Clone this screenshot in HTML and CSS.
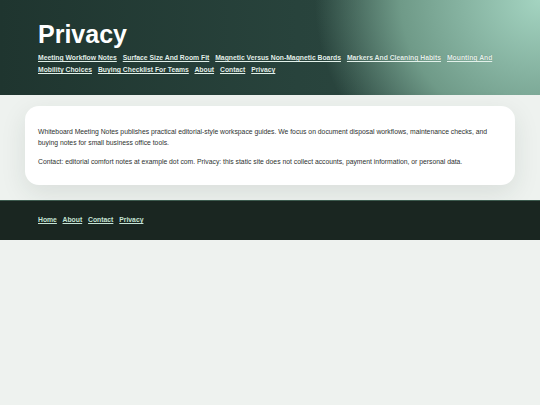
FILE: index.html
```html
<!DOCTYPE html>
<html lang="en">
<head>
<meta charset="utf-8">
<title>Privacy</title>
<link rel="stylesheet" href="styles.css">
</head>
<body>
<header class="site-header">
  <h1 class="page-title">Privacy</h1>
  <nav class="top-nav">
    <a href="#">Meeting Workflow Notes</a>
    <a href="#">Surface Size And Room Fit</a>
    <a href="#">Magnetic Versus Non-Magnetic Boards</a>
    <a href="#">Markers And Cleaning Habits</a>
    <a href="#">Mounting And Mobility Choices</a>
    <a href="#">Buying Checklist For Teams</a>
    <a href="#">About</a>
    <a href="#">Contact</a>
    <a href="#">Privacy</a>
  </nav>
</header>
<main class="content">
  <section class="card">
    <p>Whiteboard Meeting Notes publishes practical editorial-style workspace guides. We focus on document disposal workflows, maintenance checks, and buying notes for small business office tools.</p>
    <p>Contact: editorial comfort notes at example dot com. Privacy: this static site does not collect accounts, payment information, or personal data.</p>
  </section>
</main>
<footer class="site-footer">
  <nav class="foot-nav">
    <a href="#">Home</a>
    <a href="#">About</a>
    <a href="#">Contact</a>
    <a href="#">Privacy</a>
  </nav>
</footer>
</body>
</html>
```

FILE: styles.css
```css
* { box-sizing: border-box; }

body {
  margin: 0;
  background: #eef2ef;
  font-family: "Liberation Sans", Arial, sans-serif;
  color: #2b2f2d;
}

/* dark green band with a pale glow in the top-right corner */
.site-header {
  padding: 21px 38px 19px;
  background:
    radial-gradient(ellipse 225px 210px at 100% 0%, #a4d4c1 0%, #86b3a1 35%, #6f9a88 62%, rgba(46, 74, 67, 0) 100%),
    linear-gradient(90deg, #1f352f 0%, #28433c 55%, #2e4a43 100%);
}

.page-title {
  margin: 0 0 3.5px;
  font-size: 25px;
  line-height: 1.1;
  font-weight: 700;
  color: #ffffff;
}

.top-nav {
  font-size: 6.8px;
  line-height: 12px;
  font-weight: 700;
}

.top-nav a {
  margin-right: 4px;
  color: #e2f1ea;
  text-decoration: underline;
  text-shadow: 0 0 1px rgba(0, 0, 0, 0.35);
}

.content {
  padding: 11px 25px 15px;
}

.card {
  background: #ffffff;
  border-radius: 14px;
  padding: 19.5px 13px 18.5px;
  box-shadow: 0 8px 26px rgba(30, 50, 42, 0.1);
}

.card p {
  margin: 0;
  font-size: 6.8px;
  line-height: 11px;
  color: #2e3230;
}

.card p + p {
  margin-top: 8px;
}

.site-footer {
  background: #1a2621;
  border-top: 1px solid #3c5a4e;
  padding: 13px 38px 14px;
}

.foot-nav {
  font-size: 6.8px;
  line-height: 12px;
  font-weight: 700;
}

.foot-nav a {
  margin-right: 4px;
  color: #c6e4d6;
  text-decoration: underline;
}
```
